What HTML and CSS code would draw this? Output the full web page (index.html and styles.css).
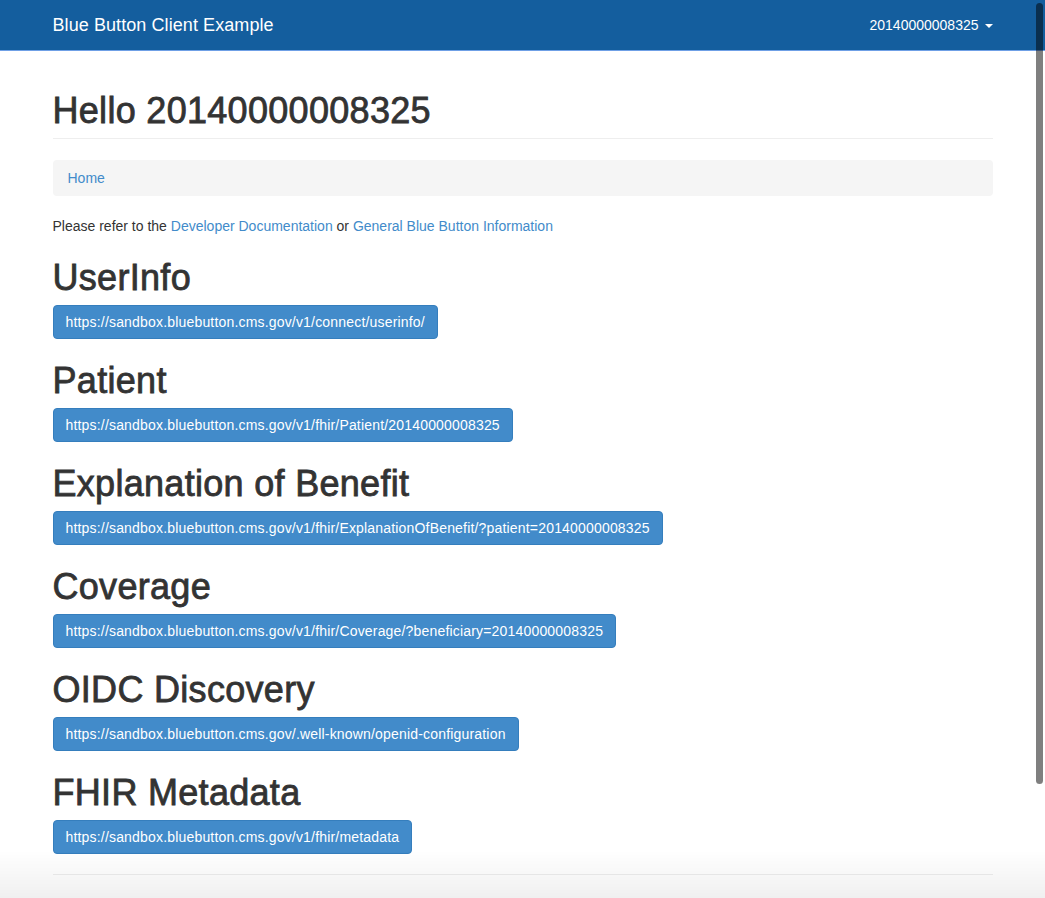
FILE: index.html
```html
<!DOCTYPE html>
<html lang="en">
<head>
<meta charset="utf-8">
<title>Blue Button Client Example</title>
<link rel="stylesheet" href="styles.css">
</head>
<body>
<nav class="navbar">
  <div class="container navbar-inner">
    <a class="brand" href="#">Blue Button Client Example</a>
    <a class="user-menu" href="#">20140000008325<span class="caret"></span></a>
  </div>
</nav>
<main class="container">
  <div class="page-header">
    <h1>Hello 20140000008325</h1>
  </div>
  <ol class="breadcrumb"><li><a href="#">Home</a></li></ol>
  <p class="intro">Please refer to the <a href="#">Developer Documentation</a> or <a href="#">General Blue Button Information</a></p>

  <section class="endpoint">
    <h1>UserInfo</h1>
    <a class="btn" href="#">https://sandbox.bluebutton.cms.gov/v1/connect/userinfo/</a>
  </section>
  <section class="endpoint">
    <h1>Patient</h1>
    <a class="btn" href="#">https://sandbox.bluebutton.cms.gov/v1/fhir/Patient/20140000008325</a>
  </section>
  <section class="endpoint">
    <h1>Explanation of Benefit</h1>
    <a class="btn" href="#">https://sandbox.bluebutton.cms.gov/v1/fhir/ExplanationOfBenefit/?patient=20140000008325</a>
  </section>
  <section class="endpoint">
    <h1>Coverage</h1>
    <a class="btn" href="#">https://sandbox.bluebutton.cms.gov/v1/fhir/Coverage/?beneficiary=20140000008325</a>
  </section>
  <section class="endpoint">
    <h1>OIDC Discovery</h1>
    <a class="btn" href="#">https://sandbox.bluebutton.cms.gov/.well-known/openid-configuration</a>
  </section>
  <section class="endpoint">
    <h1>FHIR Metadata</h1>
    <a class="btn" href="#">https://sandbox.bluebutton.cms.gov/v1/fhir/metadata</a>
  </section>
  <hr class="rule">
  <div class="spacer"></div>
</main>
<div class="scroll-thumb"></div>
<div class="window-shade"></div>
</body>
</html>
```

FILE: styles.css
```css
* { box-sizing: border-box; }
html, body { margin: 0; padding: 0; }
body {
  font-family: "Liberation Sans", Arial, sans-serif;
  font-size: 14px;
  line-height: 20px;
  color: #333;
  background: #fff;
}
a { color: #428bca; text-decoration: none; }

.container {
  width: 970px;
  margin: 0 auto;
  padding: 0 15px;
}

.navbar {
  height: 51px;
  background: #145e9e;
  border-bottom: 1px solid #6fa0e6;
}
.navbar-inner {
  display: flex;
  justify-content: space-between;
  align-items: flex-start;
}
.brand {
  color: #fff;
  font-size: 18px;
  line-height: 20px;
  padding: 15px 0;
  letter-spacing: 0.08px;
}
.user-menu {
  color: #fff;
  font-size: 14px;
  line-height: 20px;
  padding: 15px 0;
  display: flex;
  align-items: center;
}
.caret {
  display: inline-block;
  width: 0;
  height: 0;
  margin-left: 6px;
  margin-top: 1px;
  border-top: 4px solid #fff;
  border-left: 4px solid transparent;
  border-right: 4px solid transparent;
}

h1 {
  font-size: 36px;
  font-weight: 400;
  line-height: 40px;
  letter-spacing: 0.3px;
  -webkit-text-stroke: 0.8px #333;
  margin: 0;
  color: #333;
}

.page-header {
  margin-top: 40px;
  padding-bottom: 7px;
  border-bottom: 1px solid #eee;
}

.breadcrumb {
  list-style: none;
  margin: 21px 0 20px;
  padding: 8px 15px;
  background: #f5f5f5;
  border-radius: 4px;
}

.intro { margin: 0; }

.endpoint { margin-top: 22px; }
.endpoint h1 { margin-bottom: 7px; }

.btn {
  display: inline-block;
  padding: 6px 12px;
  font-size: 14px;
  line-height: 20px;
  letter-spacing: 0.18px;
  color: #fff;
  background: #428bca;
  border: 1px solid #357ebd;
  border-radius: 4px;
  white-space: nowrap;
}

.rule {
  margin: 20px 0 0;
  border: 0;
  border-top: 1px solid #eee;
}
.spacer { height: 60px; }

.scroll-thumb {
  position: fixed;
  top: 3px;
  left: 1036px;
  width: 7px;
  height: 781px;
  border-radius: 4px;
  background: rgba(0, 0, 0, 0.5);
}
.window-shade {
  position: fixed;
  left: 0;
  right: 0;
  bottom: 0;
  height: 48px;
  background: linear-gradient(to bottom, rgba(0,0,0,0), rgba(0,0,0,0.06));
  pointer-events: none;
}
```
